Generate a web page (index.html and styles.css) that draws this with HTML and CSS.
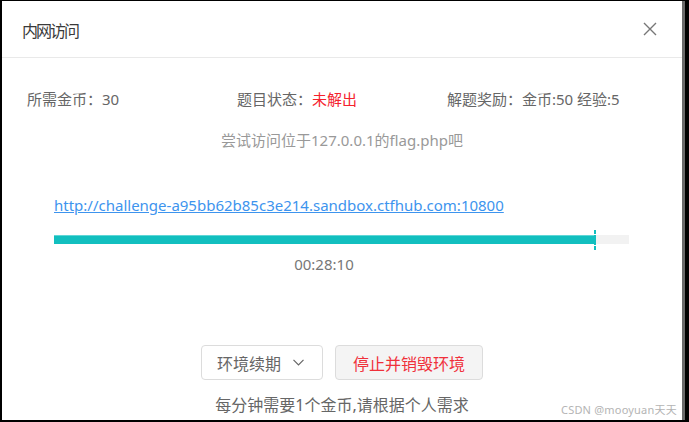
FILE: index.html
```html
<!DOCTYPE html>
<html lang="zh-CN">
<head>
<meta charset="utf-8">
<title>内网访问</title>
<link rel="stylesheet" href="styles.css">
</head>
<body>
<div class="frame">
  <div class="dialog">
    <div class="dialog-header">
      <span class="dialog-title">内网访问</span>
      <button class="close-btn" aria-label="关闭">
        <svg width="14" height="14" viewBox="0 0 14 14"><path d="M1 1 L13 13 M13 1 L1 13" stroke="#777" stroke-width="1.4" fill="none"/></svg>
      </button>
    </div>
    <div class="dialog-body">
      <div class="info-row">
        <div class="info-item">所需金币：30</div>
        <div class="info-item">题目状态：<span class="unsolved">未解出</span></div>
        <div class="info-item">解题奖励：金币:50 经验:5</div>
      </div>
      <p class="hint">尝试访问位于127.0.0.1的flag.php吧</p>
      <div class="env">
        <a class="env-link" href="#">http://challenge-a95bb62b85c3e214.sandbox.ctfhub.com:10800</a>
        <div class="progress">
          <div class="progress-fill" style="width: 93.9%">
            <span class="progress-marker"></span>
          </div>
        </div>
        <div class="time-wrap" style="width: 93.9%">
          <span class="time">00:28:10</span>
        </div>
      </div>
      <div class="actions">
        <button class="btn btn-renew">环境续期
          <svg width="11" height="7" viewBox="0 0 11 7"><path d="M0.5 0.8 L5.5 5.8 L10.5 0.8" stroke="#666" stroke-width="1.2" fill="none"/></svg>
        </button>
        <button class="btn btn-stop">停止并销毁环境</button>
      </div>
      <p class="footer-note">每分钟需要1个金币,请根据个人需求</p>
    </div>
    <div class="watermark">CSDN @mooyuan天天</div>
  </div>
</div>
</body>
</html>
```
FILE: styles.css
```css
* { box-sizing: border-box; }
html, body {
  margin: 0;
  padding: 0;
  background: #000;
  width: 689px;
  height: 422px;
  overflow: hidden;
}
body {
  font-family: "Noto Sans", "Noto Sans CJK SC", sans-serif;
  color: #666;
}
.frame {
  padding: 1px 4px 2px 2px;
  height: 422px;
}
.dialog {
  position: relative;
  height: 419px;
  background: #fff;
  border-right: 3px solid #6a6a6a;
  overflow: hidden;
}
.dialog-header {
  height: 57px;
  border-bottom: 1px solid #e9e9e9;
  display: flex;
  align-items: center;
  justify-content: space-between;
  padding: 0 25px 0 20px;
}
.dialog-title {
  font-size: 16px;
  color: #3a3a3a;
  letter-spacing: -2px;
  padding-top: 1px;
}
.close-btn {
  background: none;
  border: 0;
  padding: 0;
  display: flex;
  cursor: pointer;
}
.dialog-body {
  display: flex;
  flex-direction: column;
}
.info-row {
  margin-top: 30px;
  padding: 0 25px;
  display: grid;
  grid-template-columns: 1fr 1fr 1fr;
  font-size: 15px;
  line-height: 22px;
  color: #666;
}
.unsolved { color: #f5222d; }
.hint {
  margin: 19px 0 0;
  text-align: center;
  font-size: 15px;
  line-height: 22px;
  color: #999;
}
.env {
  margin-top: 43px;
  padding: 0 53px 0 52px;
  display: flex;
  flex-direction: column;
  align-items: flex-start;
}
.env-link {
  font-size: 15px;
  line-height: 22px;
  color: #3d94ee;
  text-decoration: underline;
}
.progress {
  margin-top: 19px;
  width: 100%;
  height: 9px;
  background: #f2f2f2;
}
.progress-fill {
  position: relative;
  height: 100%;
  background: #12bfbf;
  border-top: 1px solid #5fd6d6;
}
.progress-marker {
  position: absolute;
  right: -2px;
  top: -6px;
  width: 2px;
  height: 20px;
  background: linear-gradient(#12bfbf 0 4px, transparent 4px 5px, #12bfbf 5px 15px, transparent 15px 16px, #12bfbf 16px);
}
.time-wrap {
  margin-top: 9px;
  text-align: center;
}
.time {
  font-size: 15px;
  line-height: 20px;
  color: #777;
}
.actions {
  margin-top: 70px;
  display: flex;
  justify-content: center;
  gap: 12px;
}
.btn {
  height: 35px;
  font-family: inherit;
  font-size: 16px;
  border-radius: 4px;
  border: 1px solid #dcdcdc;
  display: flex;
  align-items: center;
  cursor: pointer;
}
.btn-renew {
  background: #fff;
  color: #666;
  padding: 0 18px 0 15px;
  gap: 12px;
}
.btn-stop {
  background: #f4f4f4;
  color: #f0303a;
  padding: 0 17px;
}
.footer-note {
  margin: 14px 0 0;
  text-align: center;
  font-size: 16px;
  line-height: 22px;
  color: #666;
}
.watermark {
  position: absolute;
  left: 559px;
  top: 400px;
  font-size: 11px;
  color: #b4b4b4;
  white-space: nowrap;
  letter-spacing: 0.2px;
}
```
